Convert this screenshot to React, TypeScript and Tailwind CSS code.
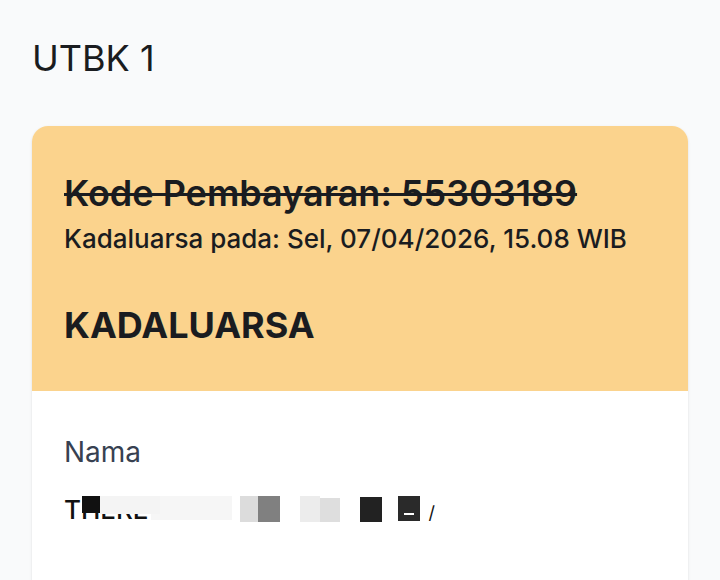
import React from "react";

function Block({ w, h, c, mt = 0 }: { w: number; h: number; c: string; mt?: number }) {
  return <span className="inline-block shrink-0" style={{ width: w, height: h, background: c, marginTop: mt }} />;
}

export default function App() {
  return (
    <div className="h-[580px] w-[720px] overflow-hidden bg-[#f9fafb] px-8 pt-[36px]" style={{ fontFamily: "Inter, 'Noto Sans', sans-serif" }}>
      <h1 className="text-[36px] leading-[44px] font-normal text-[#1a1c20]">UTBK 1</h1>
      <div className="mt-[46px] rounded-2xl bg-white shadow-sm overflow-hidden">
        <div className="flex flex-col bg-[#fbd38d] px-8 pt-[45px] pb-[44px] text-[#1a1c20]">
          <div className="text-[36px] leading-[44px] font-semibold line-through decoration-[3px]">Kode Pembayaran: 55303189</div>
          <div className="mt-[7px] text-[26px] leading-[34px] font-medium">Kadaluarsa pada: Sel, 07/04/2026, 15.08 WIB</div>
          <div className="mt-[47px] text-[36px] leading-[44px] font-bold">KADALUARSA</div>
        </div>
        <div className="flex flex-col px-8 pt-[43px] pb-[100px]">
          <div className="text-[28px] leading-[36px] text-[#374151]">Nama</div>
          <div className="mt-[26px] flex h-[28px] items-start">
            <span className="relative text-[26px] leading-[27px] font-medium text-[#111]">
              THERE
              <span className="absolute left-[18px] top-[0px] h-[17px] w-[18px] bg-[#111]" />
              <span className="absolute left-[36px] top-[0px] h-[18px] w-[60px] bg-[#f4f4f4]" />
            </span>
            <span className="ml-[2px] flex items-start gap-0">
              <Block w={81} h={24} c="#f6f6f6" />
              <Block w={8} h={24} c="#ffffff" />
              <Block w={18} h={26} c="#dcdcdc" />
              <Block w={22} h={26} c="#808080" />
              <Block w={20} h={26} c="#ffffff" />
              <Block w={20} h={26} c="#ececec" />
              <Block w={20} h={24} c="#dedede" mt={2} />
              <Block w={20} h={26} c="#ffffff" />
              <Block w={22} h={25} c="#222222" mt={1} />
              <Block w={16} h={26} c="#ffffff" />
              <span className="relative inline-block h-[25px] w-[22px] bg-[#2a2a2a]">
                <span className="absolute left-[6px] top-[17px] h-[2px] w-[10px] bg-white" />
              </span>
              <span className="ml-[9px] mt-[8px] text-[18px] leading-[18px] text-[#111]">/</span>
            </span>
          </div>
        </div>
      </div>
    </div>
  );
}
